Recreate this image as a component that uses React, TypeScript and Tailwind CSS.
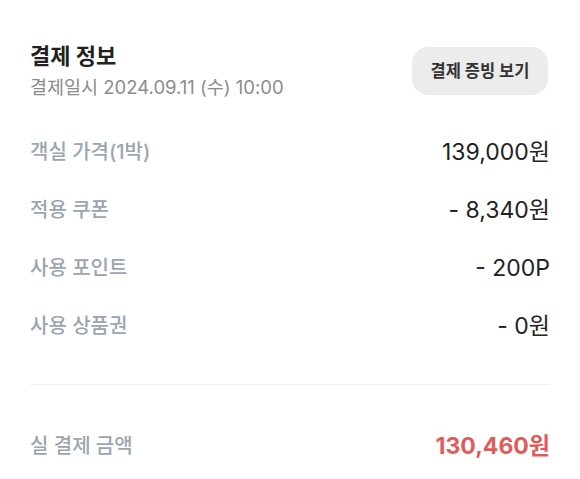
const rows = [
  { label: '객실 가격(1박)', value: '139,000원' },
  { label: '적용 쿠폰', value: '- 8,340원' },
  { label: '사용 포인트', value: '- 200P' },
  { label: '사용 상품권', value: '- 0원' },
];

export default function App() {
  return (
    <div
      className="w-[580px] h-[479px] bg-white px-[30px] pt-[41px] overflow-hidden"
      style={{ fontFamily: 'Inter, "Noto Sans CJK KR", "Noto Sans", sans-serif' }}
    >
      <div className="flex items-start justify-between">
        <div>
          <h2 className="text-[22px] leading-[30px] font-bold text-[#222222]">결제 정보</h2>
          <p className="mt-[2px] text-[18.5px] leading-[28px] text-[#8c8c8c]">결제일시 2024.09.11 (수) 10:00</p>
        </div>
        <button className="mt-[6px] mr-[2px] h-[48px] w-[136px] rounded-[16px] bg-[#ececec] text-[16.5px] font-bold text-[#333333]">
          결제 증빙 보기
        </button>
      </div>

      <div className="mt-[22px]">
        {rows.map((r) => (
          <div key={r.label} className="flex h-[58px] items-center justify-between">
            <span className="text-[20px] font-medium text-[#9ba5b1]">{r.label}</span>
            <span className="text-[23px] text-[#222222]">{r.value}</span>
          </div>
        ))}
      </div>

      <div className="mt-[29px] h-px bg-[#f1f1f1]" />

      <div className="mt-[32px] flex h-[58px] items-center justify-between">
        <span className="text-[20px] font-medium text-[#9ba5b1]">실 결제 금액</span>
        <span className="text-[23px] font-bold text-[#e05c5c]">130,460원</span>
      </div>
    </div>
  );
}
